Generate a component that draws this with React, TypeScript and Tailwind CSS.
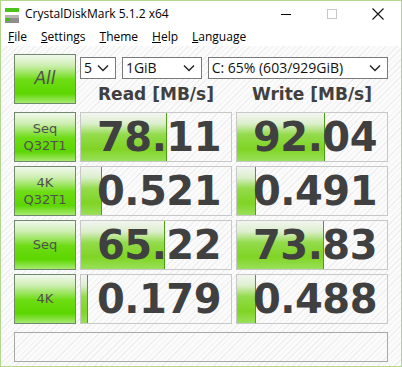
import React from "react";

const hatch =
  "bg-[repeating-linear-gradient(135deg,#efefef_0px,#efefef_1px,#fbfbfb_1px,#fbfbfb_4px)]";

const rows = [
  { label: ["Seq", "Q32T1"], read: "78.11", rf: 86, write: "92.04", wf: 88 },
  { label: ["4K", "Q32T1"], read: "0.521", rf: 21, write: "0.491", wf: 19 },
  { label: ["Seq"], read: "65.22", rf: 84, write: "73.83", wf: 87 },
  { label: ["4K"], read: "0.179", rf: 7, write: "0.488", wf: 19 },
];

function Chevron() {
  return (
    <svg width="12" height="8" viewBox="0 0 12 8" className="shrink-0">
      <polyline points="1,1.5 6,6.5 11,1.5" fill="none" stroke="#222" strokeWidth="1.4" />
    </svg>
  );
}

function Select({ value, w }: { value: string; w: string }) {
  return (
    <div
      className={`${w} h-[22px] bg-white border border-[#7a7a7a] flex items-center justify-between pl-[3px] pr-[6px] text-[14px] text-[#111] font-['Open_Sans',sans-serif] leading-none`}
    >
      <span>{value}</span>
      <Chevron />
    </div>
  );
}

function GreenButton({ children }: { children: React.ReactNode }) {
  return (
    <div className="w-[62px] h-[50px] border border-[#72886c] bg-[linear-gradient(to_bottom,#f2f9ee_0%,#cdeeb0_22%,#6ddc14_52%,#5cd600_80%,#a6ea70_100%)] flex flex-col items-center justify-center text-[#505050] font-['DejaVu_Sans',sans-serif]">
      {children}
    </div>
  );
}

function Value({ text, fill }: { text: string; fill: number }) {
  return (
    <div className="relative w-[152px] h-[50px] border border-[#c8c8c8] flex items-center justify-end pr-[10px]">
      <div
        className="absolute left-0 top-0 bottom-0 border-r border-[#4f9e14] bg-[linear-gradient(to_bottom,#f3f5f1_0%,#dcefcd_22%,#93db4c_45%,#80d424_75%,#98e05a_100%)]"
        style={{ width: fill }}
      />
      <span className="relative text-[40px] leading-none font-bold text-[#404040] font-['DejaVu_Sans',sans-serif] tracking-[-0.5px]">
        {text}
      </span>
    </div>
  );
}

function DriveIcon() {
  return (
    <svg width="16" height="16" viewBox="0 0 16 16">
      <rect x="1" y="0" width="14" height="4" fill="#4cc21c" />
      <rect x="1" y="7" width="14" height="8" fill="#8d8d8d" />
      <rect x="1" y="7" width="14" height="3" fill="#b5b5b5" />
      <rect x="2" y="10" width="4" height="3" fill="#3fbf10" />
    </svg>
  );
}

function MenuItem({ k, rest }: { k: string; rest: string }) {
  return (
    <span>
      <span className="underline underline-offset-1">{k}</span>
      {rest}
    </span>
  );
}

export default function App() {
  return (
    <div className="w-[402px] h-[367px] border border-[#b4d88b] bg-white flex flex-col overflow-hidden">
      <div className="h-[26px] flex items-center shrink-0 font-['Open_Sans',sans-serif] text-[12px] text-black">
        <div className="pl-[3px] pt-[3px]">
          <DriveIcon />
        </div>
        <span className="ml-[5px]">CrystalDiskMark 5.1.2 x64</span>
        <div className="ml-auto flex items-center">
          <div className="w-[46px] h-[26px] flex items-center justify-center">
            <div className="w-[10px] h-px bg-black" />
          </div>
          <div className="w-[46px] h-[26px] flex items-center justify-center">
            <div className="w-[10px] h-[10px] border border-[#c8c8c8]" />
          </div>
          <div className="w-[46px] h-[26px] flex items-center justify-center">
            <svg width="12" height="12" viewBox="0 0 12 12">
              <path d="M0.5 0.5 L11.5 11.5 M11.5 0.5 L0.5 11.5" stroke="#111" strokeWidth="1.1" />
            </svg>
          </div>
        </div>
      </div>
      <div className="h-[19px] flex items-center gap-[14px] pl-[7px] shrink-0 font-['Open_Sans',sans-serif] text-[12px] text-black">
        <MenuItem k="F" rest="ile" />
        <MenuItem k="S" rest="ettings" />
        <MenuItem k="T" rest="heme" />
        <MenuItem k="H" rest="elp" />
        <MenuItem k="L" rest="anguage" />
      </div>
      <div className={`flex-1 ${hatch} pl-[13px] pt-[8px] flex flex-col`}>
        <div className="grid grid-cols-[62px_152px_152px] gap-[4px]">
          <GreenButton>
            <span className="text-[17px] italic">All</span>
          </GreenButton>
          <div className="col-span-2 flex flex-col">
            <div className="flex gap-[6px] mt-[3px]">
              <Select value="5" w="w-[36px]" />
              <Select value="1GiB" w="w-[80px]" />
              <Select value="C: 65% (603/929GiB)" w="w-[181px]" />
            </div>
            <div className="flex flex-1 items-center pt-[3px] font-['DejaVu_Sans',sans-serif] font-bold text-[17px] text-[#404040]">
              <div className="w-[152px] text-center">Read [MB/s]</div>
              <div className="w-[152px] ml-[4px] text-center">Write [MB/s]</div>
            </div>
          </div>
          {rows.map((r, i) => (
            <React.Fragment key={i}>
              <GreenButton>
                {r.label.map((l, j) => (
                  <span key={j} className="text-[13px] leading-[17px]">
                    {l}
                  </span>
                ))}
              </GreenButton>
              <Value text={r.read} fill={r.rf} />
              <Value text={r.write} fill={r.wf} />
            </React.Fragment>
          ))}
        </div>
        <div className="mt-[8px] w-[374px] h-[30px] border border-[#a8a8a8]" />
      </div>
    </div>
  );
}
